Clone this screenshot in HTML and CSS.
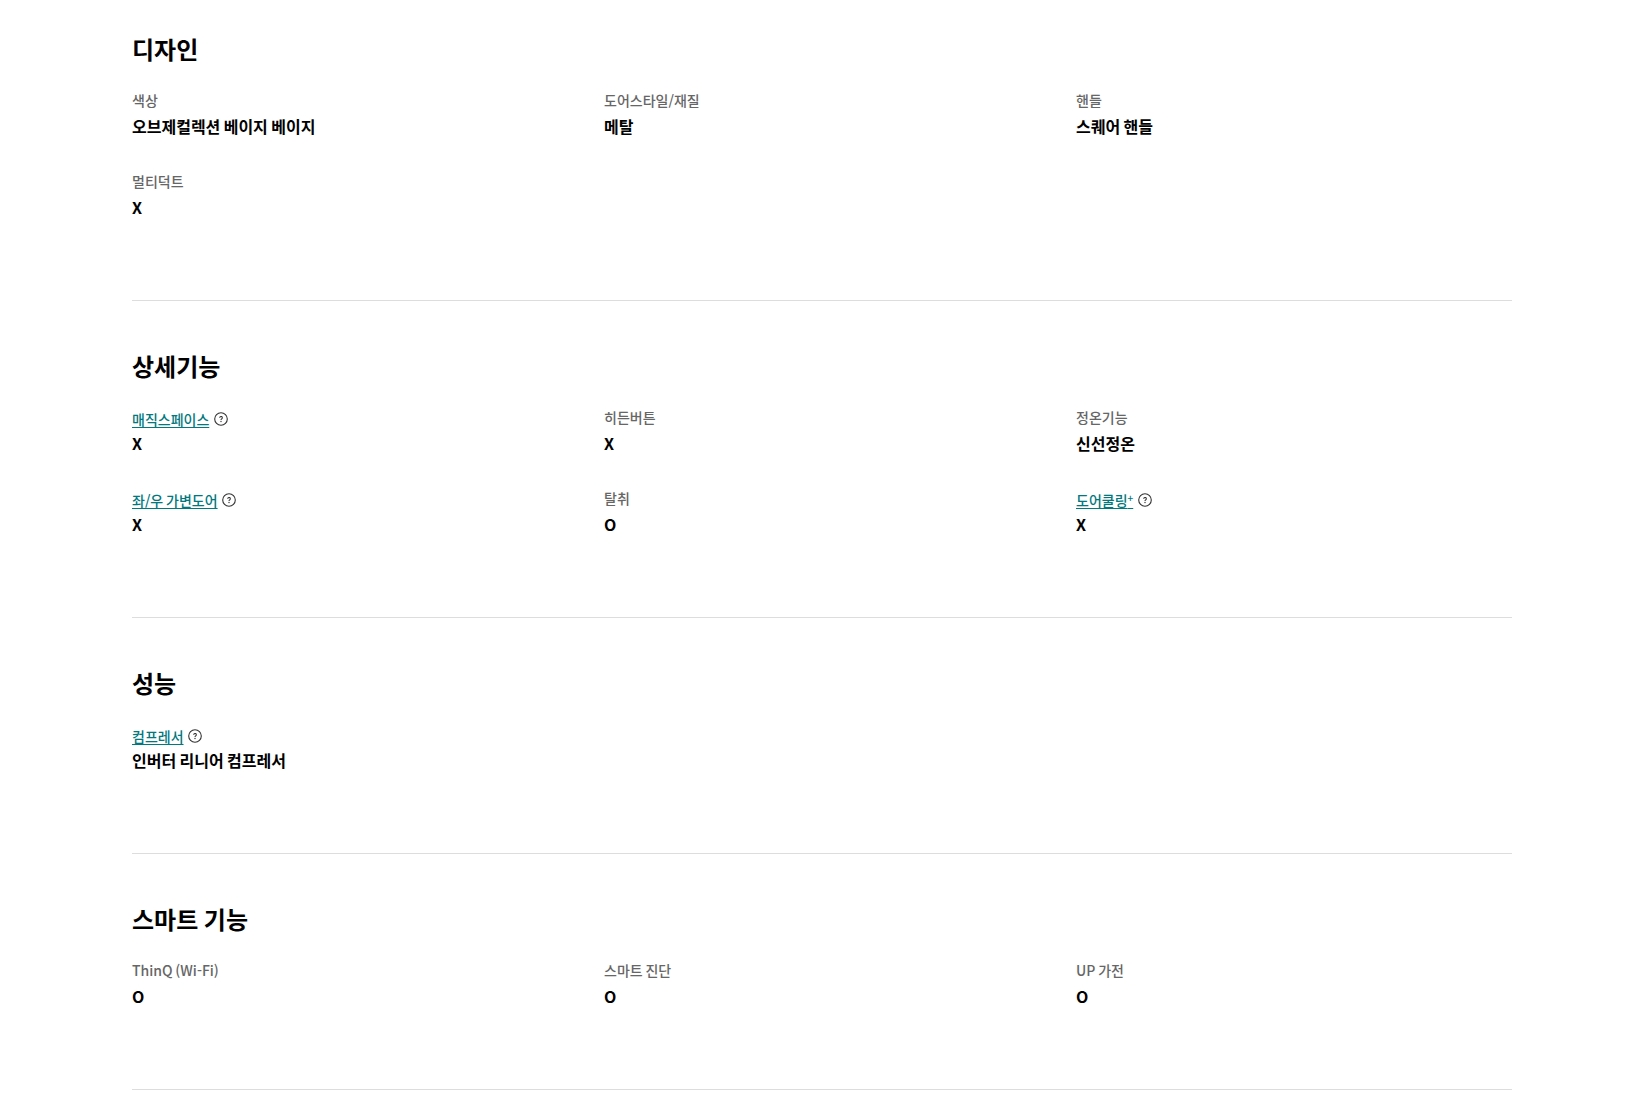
FILE: index.html
```html
<!DOCTYPE html>
<html lang="ko">
<head>
<meta charset="utf-8">
<title>제품 사양</title>
<link rel="stylesheet" href="styles.css">
</head>
<body>
<main class="spec">
  <section class="group group-first">
    <h2 class="group-title">디자인</h2>
    <dl class="grid">
      <div class="item"><dt class="label">색상</dt><dd class="value">오브제컬렉션 베이지 베이지</dd></div>
      <div class="item"><dt class="label">도어스타일/재질</dt><dd class="value">메탈</dd></div>
      <div class="item"><dt class="label">핸들</dt><dd class="value">스퀘어 핸들</dd></div>
      <div class="item"><dt class="label">멀티덕트</dt><dd class="value">X</dd></div>
    </dl>
  </section>
  <section class="group">
    <h2 class="group-title">상세기능</h2>
    <dl class="grid">
      <div class="item"><dt class="label label-link"><a class="link" href="#">매직스페이스</a><svg class="help" viewBox="0 0 14 14"><circle cx="7" cy="7" r="6.3"/><path d="M5.7 5.8a1.3 1.3 0 1 1 2.1 1c-.5.4-.8.6-.8 1.1"/><circle class="dot" cx="7" cy="9.5" r=".7"/></svg></dt><dd class="value">X</dd></div>
      <div class="item"><dt class="label">히든버튼</dt><dd class="value">X</dd></div>
      <div class="item"><dt class="label">정온기능</dt><dd class="value">신선정온</dd></div>
      <div class="item"><dt class="label label-link"><a class="link" href="#">좌/우 가변도어</a><svg class="help" viewBox="0 0 14 14"><circle cx="7" cy="7" r="6.3"/><path d="M5.7 5.8a1.3 1.3 0 1 1 2.1 1c-.5.4-.8.6-.8 1.1"/><circle class="dot" cx="7" cy="9.5" r=".7"/></svg></dt><dd class="value">X</dd></div>
      <div class="item"><dt class="label">탈취</dt><dd class="value">O</dd></div>
      <div class="item"><dt class="label label-link"><a class="link" href="#">도어쿨링<sup class="plus">+</sup></a><svg class="help" viewBox="0 0 14 14"><circle cx="7" cy="7" r="6.3"/><path d="M5.7 5.8a1.3 1.3 0 1 1 2.1 1c-.5.4-.8.6-.8 1.1"/><circle class="dot" cx="7" cy="9.5" r=".7"/></svg></dt><dd class="value">X</dd></div>
    </dl>
  </section>
  <section class="group">
    <h2 class="group-title">성능</h2>
    <dl class="grid">
      <div class="item"><dt class="label label-link"><a class="link" href="#">컴프레서</a><svg class="help" viewBox="0 0 14 14"><circle cx="7" cy="7" r="6.3"/><path d="M5.7 5.8a1.3 1.3 0 1 1 2.1 1c-.5.4-.8.6-.8 1.1"/><circle class="dot" cx="7" cy="9.5" r=".7"/></svg></dt><dd class="value">인버터 리니어 컴프레서</dd></div>
    </dl>
  </section>
  <section class="group">
    <h2 class="group-title">스마트 기능</h2>
    <dl class="grid">
      <div class="item"><dt class="label">ThinQ (Wi-Fi)</dt><dd class="value">O</dd></div>
      <div class="item"><dt class="label">스마트 진단</dt><dd class="value">O</dd></div>
      <div class="item"><dt class="label">UP 가전</dt><dd class="value">O</dd></div>
    </dl>
  </section>
</main>
</body>
</html>
```
FILE: styles.css
```css
* { box-sizing: border-box; }
html, body { margin: 0; padding: 0; background: #fff; }
body { font-family: "Noto Sans CJK KR", "Noto Sans", sans-serif; color: #000; overflow: hidden; height: 1096px; word-spacing: -0.07em; }
.spec { width: 1380px; margin-left: 132px; }
.group { padding-top: 48px; padding-bottom: 81px; border-bottom: 1px solid #ddd; }
.group-first { padding-top: 32px; }
.group-title { margin: 0 0 22px; font-size: 24px; line-height: 34px; font-weight: 700; }
.grid { display: grid; grid-template-columns: repeat(3, 1fr); column-gap: 36px; row-gap: 31px; margin: 0; }
.item { margin: 0; }
.label { height: 24px; font-size: 14px; line-height: 24px; font-weight: 500; color: #666; }
.label-link { display: flex; align-items: center; gap: 4.5px; padding-top: 3px; }
.link { color: #00787e; text-decoration: underline; text-decoration-thickness: 1.2px; text-underline-offset: 2px; }
.plus { font-size: 10px; line-height: 0; vertical-align: 4px; }
.help { width: 14px; height: 14px; margin-top: 1px; fill: none; stroke: #333; stroke-width: 1.1; flex: none; }
.help .dot { fill: #333; stroke: none; }
.value { margin: 2px 0 0; font-size: 16px; line-height: 24px; font-weight: 700; }
```
